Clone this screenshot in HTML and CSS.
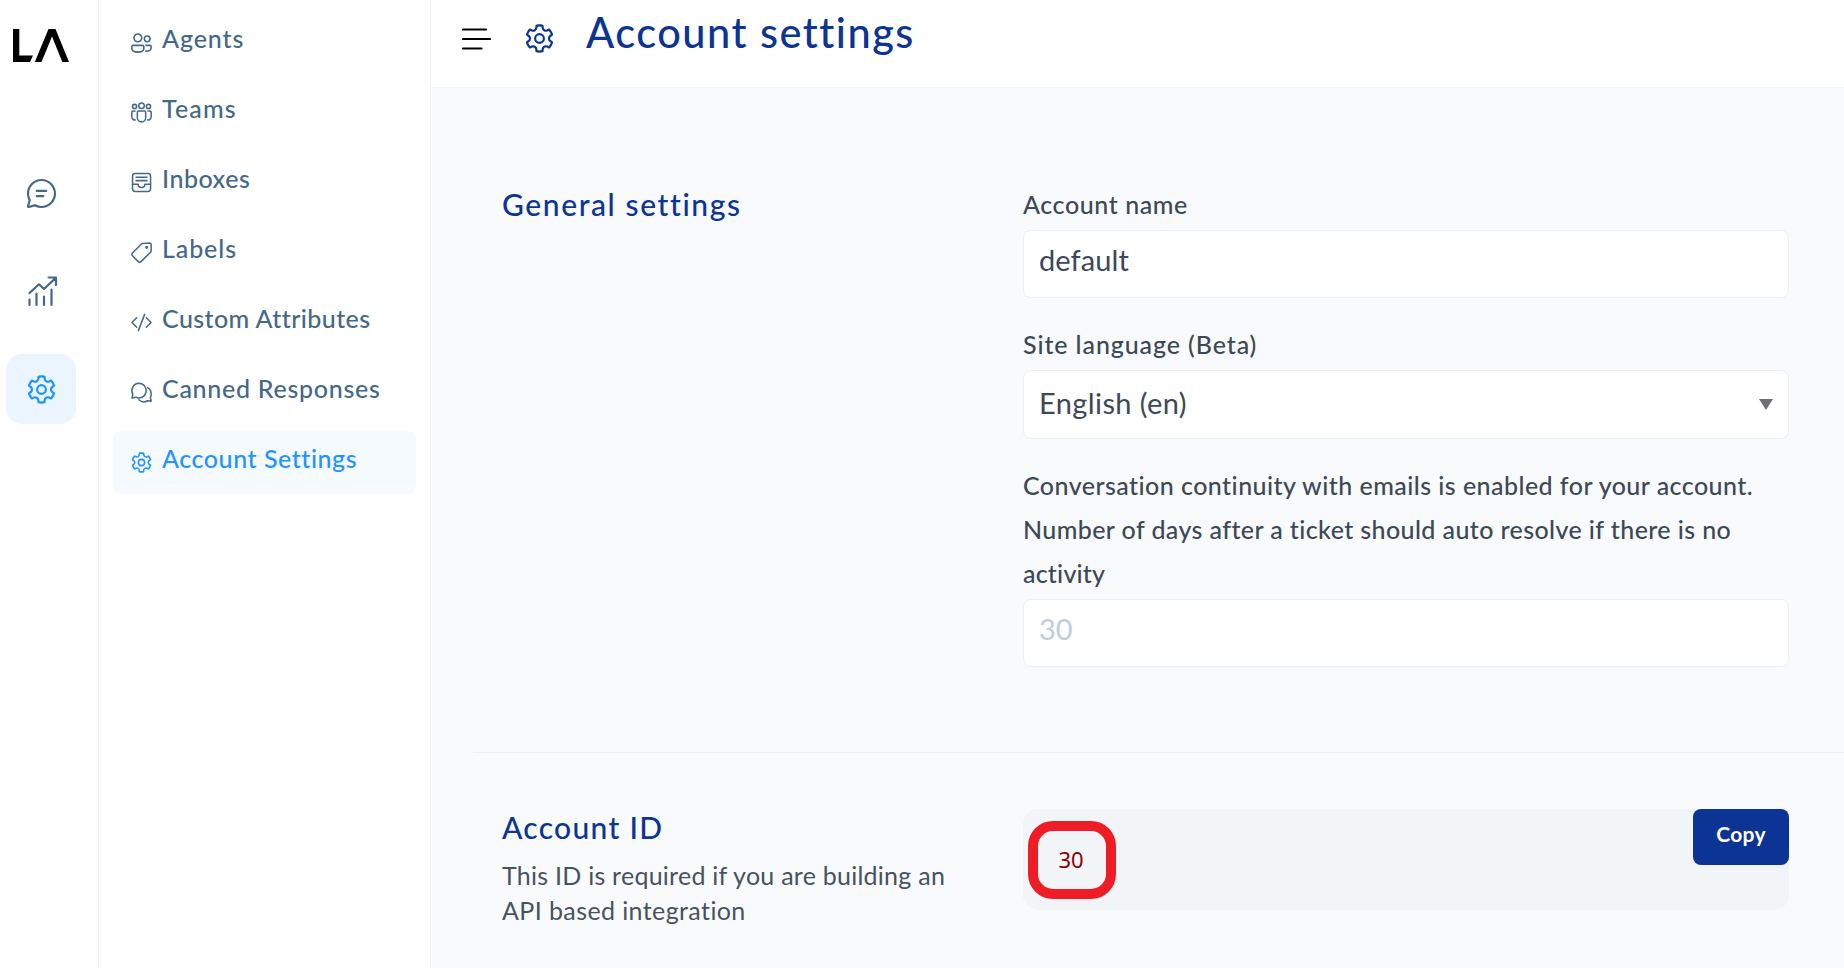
FILE: index.html
```html
<!DOCTYPE html>
<html lang="en">
<head>
<meta charset="utf-8">
<title>Account settings</title>
<link rel="stylesheet" href="styles.css">
</head>
<body>
<svg width="0" height="0" class="defs">
  <symbol id="gear" viewBox="0 0 24 24"><path fill="currentColor" d="M12.012 2.25c.734.008 1.465.093 2.182.253a.75.75 0 0 1 .582.649l.17 1.527a1.384 1.384 0 0 0 1.927 1.116l1.401-.615a.75.75 0 0 1 .85.174 9.792 9.792 0 0 1 2.204 3.792.75.75 0 0 1-.271.825l-1.242.916a1.381 1.381 0 0 0 0 2.226l1.243.915a.75.75 0 0 1 .272.826 9.797 9.797 0 0 1-2.204 3.792.75.75 0 0 1-.848.175l-1.407-.617a1.38 1.38 0 0 0-1.926 1.114l-.169 1.526a.75.75 0 0 1-.572.647 9.518 9.518 0 0 1-4.406 0 .75.75 0 0 1-.572-.647l-.168-1.524a1.382 1.382 0 0 0-1.926-1.11l-1.406.616a.75.75 0 0 1-.849-.175 9.798 9.798 0 0 1-2.204-3.796.75.75 0 0 1 .272-.826l1.243-.916a1.38 1.38 0 0 0 0-2.226l-1.243-.914a.75.75 0 0 1-.271-.826 9.793 9.793 0 0 1 2.204-3.792.75.75 0 0 1 .85-.174l1.4.615a1.387 1.387 0 0 0 1.93-1.118l.17-1.526a.75.75 0 0 1 .583-.65c.717-.159 1.45-.243 2.201-.252Zm0 1.5a9.135 9.135 0 0 0-1.354.117l-.109.977A2.886 2.886 0 0 1 6.525 7.17l-.898-.394a8.293 8.293 0 0 0-1.348 2.317l.798.587a2.881 2.881 0 0 1 0 4.643l-.799.588c.32.842.776 1.626 1.348 2.322l.905-.397a2.882 2.882 0 0 1 4.017 2.318l.11.984c.889.15 1.798.15 2.687 0l.11-.984a2.881 2.881 0 0 1 4.018-2.322l.905.396a8.296 8.296 0 0 0 1.347-2.318l-.798-.588a2.881 2.881 0 0 1 0-4.643l.796-.587a8.293 8.293 0 0 0-1.348-2.317l-.896.393a2.884 2.884 0 0 1-4.023-2.324l-.11-.976a8.988 8.988 0 0 0-1.333-.117ZM12 8.25a3.75 3.75 0 1 1 0 7.5 3.75 3.75 0 0 1 0-7.5Zm0 1.5a2.25 2.25 0 1 0 0 4.5 2.25 2.25 0 0 0 0-4.5Z"/></symbol>
</svg>
<div class="app">
  <nav class="rail">
    <svg class="logo" viewBox="0 0 56 33" width="56" height="33"><path d="M0 0H6.300V26.500H20L17 33H0ZM21.800 33L35.500 0H42.500L56 33H49.300L39 7.500L28.500 33Z"/></svg>
    <a class="rail-item"><svg width="35" height="35" viewBox="0 0 24 24"><path fill="currentColor" d="M12 2c5.523 0 10 4.477 10 10s-4.477 10-10 10a9.960 9.960 0 0 1-4.587-1.112l-3.826 1.067a1.250 1.250 0 0 1-1.540-1.540l1.068-3.823A9.960 9.960 0 0 1 2 12C2 6.477 6.477 2 12 2Zm0 1.500A8.500 8.500 0 0 0 3.500 12c0 1.470.373 2.883 1.073 4.137l.15.27-1.112 3.984 3.987-1.112.27.15A8.500 8.500 0 1 0 12 3.500ZM8.750 13h4.498a.75.75 0 0 1 0 1.500H8.750a.75.75 0 0 1 0-1.500Zm0-3.500h6.505a.75.75 0 0 1 0 1.500H8.750a.75.75 0 0 1 0-1.500Z"/></svg></a>
    <a class="rail-item"><svg class="line trend" width="35" height="35" viewBox="0 0 35 35"><path d="M5.500 19L15 10.300L20 15L31 4.500M24.500 3.500H32V11M5.500 25.500V31M12.500 19.500V31M20 22.500V31M27.500 15.500V31"/></svg></a>
    <a class="rail-item active"><svg width="35" height="35"><use href="#gear"/></svg></a>
  </nav>
  <aside class="menu">
    <a class="menu-item"><svg width="25" height="25" viewBox="0 0 24 24"><path fill="currentColor" d="M4 13.999 L13 14a2 2 0 0 1 1.995 1.850L15 16v1.500C14.999 21 11.284 22 8.500 22c-2.722 0-6.335-.956-6.495-4.270L2 17.500v-1.501c0-1.054.816-1.918 1.850-1.995L4 14ZM15.220 14H20c1.054 0 1.918.816 1.994 1.850L22 16v1c-.001 3.062-2.858 4-5 4a7.160 7.160 0 0 1-2.140-.322c.336-.386.607-.827.802-1.327A6.190 6.190 0 0 0 17 19.500l.267-.006c.985-.043 3.086-.363 3.226-2.289L20.500 17v-1a.501.501 0 0 0-.41-.492L20 15.500h-4.051a2.957 2.957 0 0 0-.595-1.340L15.220 14ZM4 15.499l-.1.010a.51.51 0 0 0-.254.136.506.506 0 0 0-.136.253l-.010.101V17.500c0 1.009.45 1.722 1.417 2.242.826.445 2.003.714 3.266.753l.317.005.317-.005c1.263-.039 2.439-.308 3.266-.753.906-.488 1.359-1.145 1.412-2.057l.005-.186V16a.501.501 0 0 0-.41-.492L13 15.500l-9-.001ZM8.500 3a4.500 4.500 0 1 1 0 9 4.500 4.500 0 0 1 0-9Zm9 2a3.500 3.500 0 1 1 0 7 3.500 3.500 0 0 1 0-7Zm-9-.5c-1.654 0-3 1.346-3 3s1.346 3 3 3 3-1.346 3-3-1.346-3-3-3Zm9 2c-1.103 0-2 .897-2 2s.897 2 2 2 2-.897 2-2-.897-2-2-2Z"/></svg><span class="t-agents">Agents</span></a>
    <a class="menu-item"><svg class="line" width="25" height="25" viewBox="0 0 24 24"><circle cx="12" cy="5.500" r="2.700"/><circle cx="5.300" cy="6.200" r="2"/><circle cx="18.700" cy="6.200" r="2"/><path d="M9.300 10.500h5.400q1.300 0 1.300 1.300V17a4 4 0 0 1-8 0v-5.200Q8 10.500 9.300 10.500ZM5.800 10.500H4q-1.300 0-1.300 1.300V16a3.300 3.300 0 0 0 3.300 3.300M18.200 10.500H20q1.300 0 1.300 1.300V16a3.300 3.300 0 0 1-3.300 3.300"/></svg><span class="t-teams">Teams</span></a>
    <a class="menu-item"><svg class="line" width="25" height="25" viewBox="0 0 24 24"><rect x="3.400" y="3.400" width="17.300" height="17.300" rx="2.600"/><path d="M3.400 13.700H8.800c0 4 6.500 4 6.500 0H20.700M6.800 7h10.500M6.800 10.200h10.500"/></svg><span class="t-inboxes">Inboxes</span></a>
    <a class="menu-item"><svg class="line" width="25" height="25" viewBox="0 0 24 24"><path d="M13.200 3.400L20 2.800a1.400 1.400 0 0 1 1.300 1.400v5.800a3 3 0 0 1-.9 2L11.800 20.500a2.200 2.200 0 0 1-3.100 0L3.500 15.300a2.200 2.200 0 0 1 0-3.100l8.200-8.100a3 3 0 0 1 1.500-.7Z"/><circle cx="17" cy="7" r=".8" fill="currentColor"/></svg><span class="t-labels">Labels</span></a>
    <a class="menu-item"><svg class="line" width="25" height="25" viewBox="0 0 24 24"><path d="M7.400 7.400L2.800 12l4.600 4.600M16.600 7.400l4.600 4.600-4.600 4.600M15 4.200L9 19.800"/></svg><span class="t-custom">Custom Attributes</span></a>
    <a class="menu-item"><svg class="line" width="25" height="25" viewBox="0 0 24 24"><path d="M9.600 3.200a7 7 0 1 1-3.100 13.300L2.900 17.400l.8-3.700A7 7 0 0 1 9.600 3.200ZM18 7.300a7 7 0 0 1 2.500 9.400l.8 3.700-3.500-.5a7 7 0 0 1-8.300-.9"/></svg><span class="t-canned">Canned Responses</span></a>
    <a class="menu-item active"><svg width="25" height="25"><use href="#gear"/></svg><span class="t-account">Account Settings</span></a>
  </aside>
  <main class="main">
    <header class="header">
      <svg class="burger" width="30" height="24" viewBox="0 0 30 24"><path d="M1 2.500H24M1 12H28M1 21.500H19.500"/></svg>
      <svg class="header-gear" width="35" height="35"><use href="#gear"/></svg>
      <h1>Account settings</h1>
    </header>
    <section class="row general">
      <h2 class="t-general">General settings</h2>
      <form class="form">
        <label class="t-name">Account name</label>
        <div class="field t-default">default</div>
        <label class="t-site">Site language (Beta)</label>
        <div class="field select"><span class="t-english">English (en)</span><svg width="14" height="11"><path d="M0 0H14L7 11Z"/></svg></div>
        <label><span class="t-conv">Conversation continuity with emails is enabled for your account.</span><br><span class="t-days">Number of days after a ticket should auto resolve if there is no</span><br><span class="t-act">activity</span></label>
        <div class="field placeholder">30</div>
      </form>
    </section>
    <section class="row account">
      <div class="intro">
        <h2 class="t-id">Account ID</h2>
        <p><span class="t-p1">This ID is required if you are building an</span><br><span class="t-p2">API based integration</span></p>
      </div>
      <div class="code"><div class="ring">30</div><button class="copy">Copy</button></div>
    </section>
  </main>
</div>
</body>
</html>
```
FILE: styles.css
```css
* { box-sizing: border-box; }
body { margin: 0; font-family: Lato, sans-serif; font-size: 25px; font-weight: 500; font-variant-ligatures: none; color: #3c4858; background: #fff; overflow: hidden; }
h1, h2, p { margin: 0; font-weight: 500; }
svg { display: block; flex: none; }
.defs { position: absolute; }
.line { fill: none; stroke: currentColor; stroke-width: 1.45; stroke-linecap: round; stroke-linejoin: round; }
.trend { stroke-width: 2.2; }
.app { display: flex; height: 968px; }
.rail { width: 99px; flex: none; border-right: 1px solid #f0f4f8; color: #446888; padding: 29px 0 0 6px; display: flex; flex-direction: column; gap: 28px; }
.logo { margin: 0 0 68px 7px; }
.rail-item { width: 70px; height: 70px; border-radius: 16px; display: flex; align-items: center; justify-content: center; }
.rail-item.active { background: #ebf5ff; color: #1f93ff; }
.menu { width: 332px; flex: none; border-right: 1px solid #f0f4f8; padding: 11px 14px; display: flex; flex-direction: column; gap: 7px; }
.menu-item { height: 63px; display: flex; align-items: center; padding-left: 15.5px; gap: 8.5px; border-radius: 8px; color: #446888; white-space: nowrap; }
.menu-item span { padding-bottom: 10px; }
.menu-item.active { background: #f5faff; color: #1f93ff; }
.main { flex: 1; background: #f9fafc; }
.header { height: 88px; background: #fff; border-bottom: 1px solid #f0f4f8; display: flex; align-items: flex-start; padding: 10px 0 0 31px; color: #0b3494; }
.burger { margin-top: 17px; fill: none; stroke: #000; stroke-width: 2.2; stroke-linecap: round; }
.header-gear { margin: 11px 0 0 30px; }
h1 { font-size: 41.5px; line-height: 44px; margin-left: 29px; white-space: nowrap; letter-spacing: 1.5px; }
h2 { font-size: 30px; line-height: 44px; color: #0b3494; white-space: nowrap; }
.row { display: grid; grid-template-columns: 521px 766px; }
.general { padding: 94px 0 0 71px; height: 664px; }
.form { display: flex; flex-direction: column; }
label { line-height: 44px; margin-bottom: 4px; white-space: nowrap; }
.field { height: 68px; border: 1px solid #ebf0f5; border-radius: 8px; background: #fff; padding: 0 15px 9px; display: flex; align-items: center; font-size: 29px; font-weight: 400; margin-bottom: 24px; }
.select { height: 69px; justify-content: space-between; padding-bottom: 4px; }
.select svg { fill: #6e6f73; margin-top: 3px; }
.placeholder { color: #c0cdda; }
.account { margin-left: 42px; padding: 52px 0 0 29px; border-top: 1px solid #edf0f2; }
p { font-weight: 400; line-height: 35px; margin-top: 9px; white-space: nowrap; color: #47525f; }
.code { margin-top: 4px; height: 101px; background: #f1f5f8; border-radius: 15px; display: flex; justify-content: space-between; }
.ring { width: 88px; height: 78px; margin: 12px 0 0 5px; border: 10px solid #ee1c25; border-radius: 25px; padding: 0 2px 2px 0; display: flex; align-items: center; justify-content: center; font-family: "Noto Sans", sans-serif; font-size: 22px; font-weight: 400; color: #8b0000; }
.copy { width: 96px; height: 56px; border: 0; border-radius: 8px; background: #0b3494; color: #fff; font: 700 21px Lato, sans-serif; letter-spacing: .3px; padding: 0 0 8px; }

/* Per-string tracking */
.t-agents { letter-spacing: .9px; }
.t-teams { letter-spacing: 1.15px; }
.t-inboxes { letter-spacing: .5px; }
.t-labels { letter-spacing: .9px; }
.t-custom { letter-spacing: .42px; }
.t-canned { letter-spacing: .73px; }
.t-account { letter-spacing: .55px; }
.t-general { letter-spacing: 1.6px; }
.t-id { letter-spacing: 1.3px; }
.t-name { letter-spacing: .58px; }
.t-site { letter-spacing: .9px; }
.t-conv { letter-spacing: .45px; }
.t-days { letter-spacing: .4px; }
.t-act { letter-spacing: .2px; }
.t-default { letter-spacing: .1px; }
.t-english { letter-spacing: .4px; }
.t-p1 { letter-spacing: .25px; }
.t-p2 { letter-spacing: .4px; }
```
